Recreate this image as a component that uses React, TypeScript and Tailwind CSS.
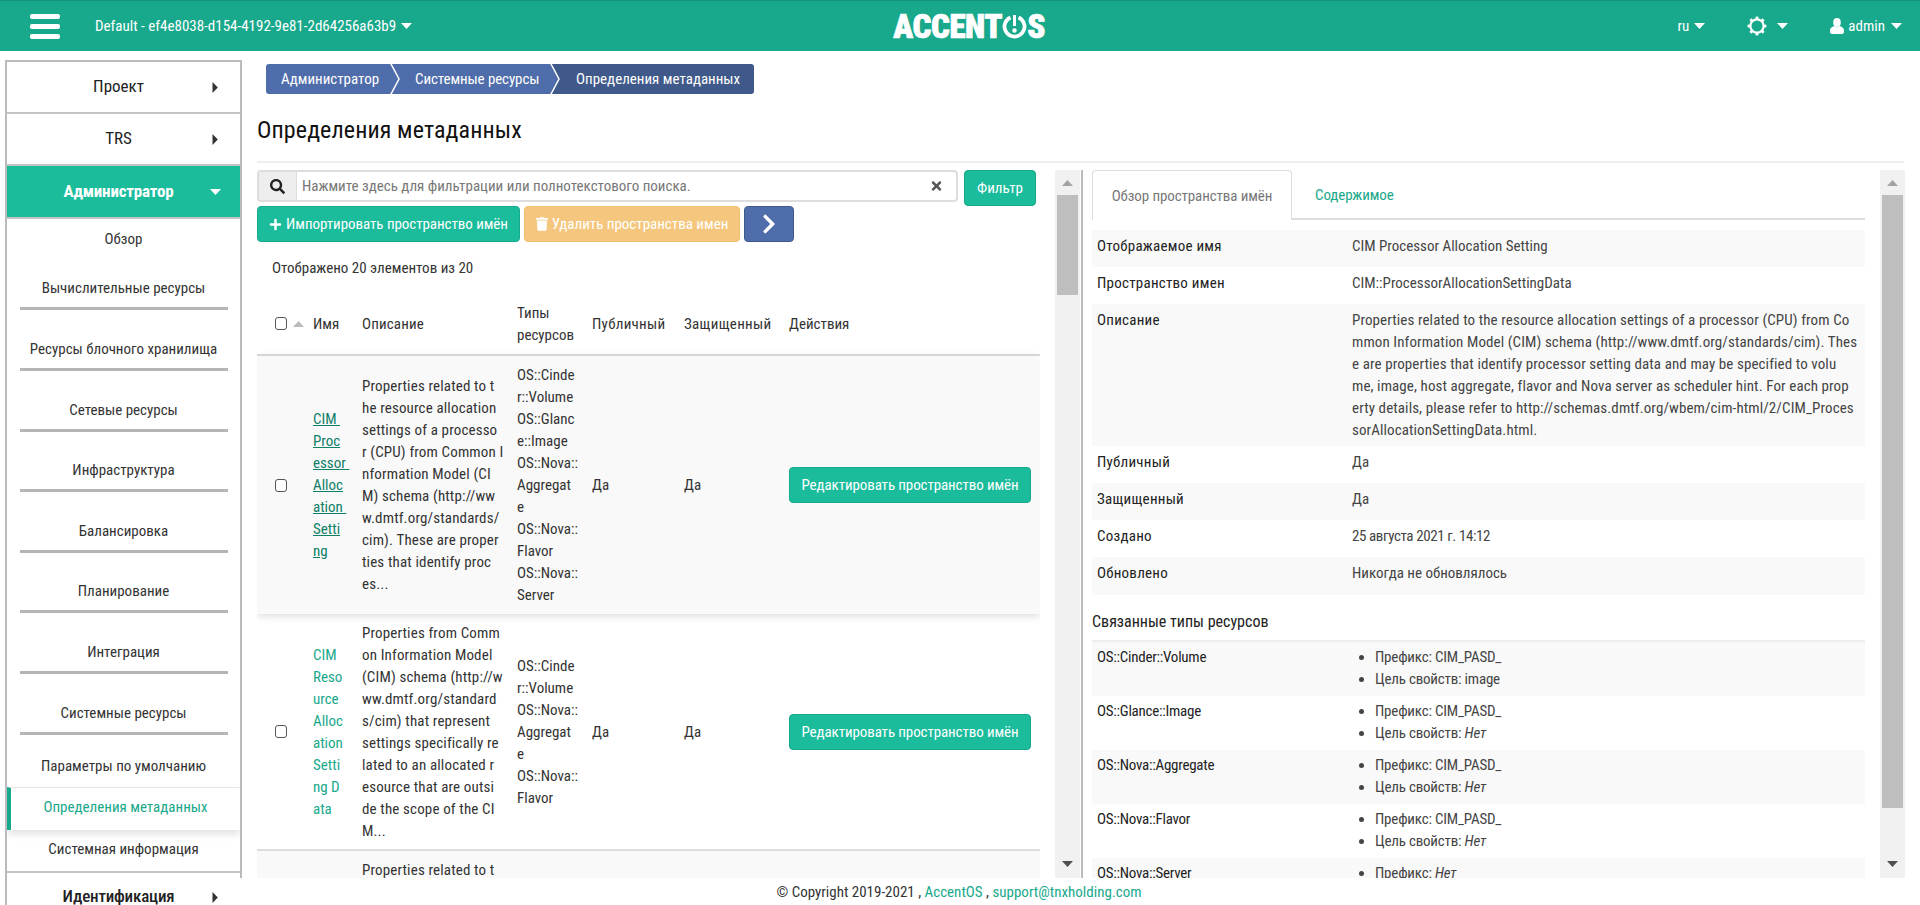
import React from "react";
import { FaSearch, FaTimes, FaPlus, FaTrash, FaChevronRight } from "react-icons/fa";

const GREEN = "text-[#18a88b]";

function Tri({ dir = "down", className = "" }: { dir?: "down" | "up" | "right"; className?: string }) {
  if (dir === "right") {
    return (
      <svg width="6" height="11" viewBox="0 0 6 11" className={"shrink-0 block " + className}>
        <path d="M0.5 0 L5.8 5.5 L0.5 11 Z" fill="currentColor" />
      </svg>
    );
  }
  return (
    <svg width="11" height="6" viewBox="0 0 11 6" className={"shrink-0 block " + className}>
      <path d={dir === "down" ? "M0 0 H11 L5.5 6 Z" : "M0 6 H11 L5.5 0 Z"} fill="currentColor" />
    </svg>
  );
}

function Gear() {
  return (
    <svg width="20" height="20" viewBox="0 0 20 20" className="text-white block">
      <circle cx="10" cy="10" r="6.6" fill="none" stroke="currentColor" strokeWidth="2.2" />
      {[0, 45, 90, 135, 180, 225, 270, 315].map((a) => (
        <rect key={a} x="8.6" y="0.6" width="2.8" height="3" fill="currentColor" transform={`rotate(${a} 10 10)`} />
      ))}
    </svg>
  );
}

function UserIcon() {
  return (
    <svg width="14" height="16" viewBox="0 0 14 16" className="block">
      <ellipse cx="7" cy="4.4" rx="3.8" ry="4.4" fill="white" />
      <path d="M0 13 C0 9.6 2.5 8.6 4.6 8 C6 9 8 9 9.4 8 C11.5 8.6 14 9.6 14 13 V14 C14 15.2 13 16 12 16 H2 C1 16 0 15.2 0 14 Z" fill="white" />
    </svg>
  );
}

function TopBar() {
  return (
    <header className="h-[51px] shrink-0 bg-[#18a88b] border-t border-t-[#149279] flex items-center text-white text-[15px] relative">
      <div className="ml-[30px] w-[30px] flex flex-col gap-[5px]">
        <span className="block h-[5px] bg-white rounded-[2px]" />
        <span className="block h-[5px] bg-white rounded-[2px]" />
        <span className="block h-[5px] bg-white rounded-[2px]" />
      </div>
      <div className="ml-[35px] w-[316px] flex items-center gap-[5px] whitespace-nowrap">
        <span>Default - ef4e8038-d154-4192-9e81-2d64256a63b9</span>
        <Tri />
      </div>
      <div className="ml-[484px] w-[150px] flex items-center justify-end text-[33px] leading-none font-black tracking-[-0.4px] whitespace-nowrap [-webkit-text-stroke:0.7px_white]">
        <span>ACCENT</span>
        <svg width="25" height="25" viewBox="0 0 25 25" className="shrink-0">
          <path d="M8.5 3.4 A10 10 0 1 0 16.5 3.4" fill="none" stroke="white" strokeWidth="3.8" />
          <rect x="11" y="1" width="3" height="11" fill="white" />
          <circle cx="12.5" cy="16.5" r="2.2" fill="white" />
        </svg>
        <span>S</span>
      </div>
      <div className="flex-1" />
      <div className="flex items-center whitespace-nowrap mr-[18px]">
        <span>ru</span>
        <Tri className="ml-[5px]" />
        <span className="ml-[42px]"><Gear /></span>
        <Tri className="ml-[10px]" />
        <span className="ml-[42px]"><UserIcon /></span>
        <span className="ml-[4px]">admin</span>
        <Tri className="ml-[6px]" />
      </div>
    </header>
  );
}

function MainItem({ label, open, active }: { label: string; open?: boolean; active?: boolean }) {
  return (
    <div
      className={
        "flex items-center border-b-2 border-b-[#c4c4c4] text-[17px] " +
        (active ? "h-[53px] bg-[#1abc9c] text-white font-bold tracking-[-0.2px]" : "h-[52px] bg-white text-[#222]")
      }
    >
      <div className="w-[203px] pl-[20px] pb-[2px] text-center">{label}</div>
      {open ? <Tri /> : <Tri dir="right" className="ml-[2px] text-[#333]" />}
    </div>
  );
}

function SubItem({ label, h }: { label: string; h: string }) {
  return (
    <div className={"flex flex-col justify-end items-center " + h}>
      <div className="mb-[8px] text-[#333] whitespace-nowrap">{label}</div>
      <div className="w-[208px] h-[3px] bg-[#b5b5b5]" />
    </div>
  );
}

function Sidebar() {
  return (
    <aside className="w-[237px] ml-[5px] mt-[9px] shrink-0 border-l-2 border-l-[#bbb] border-r-2 border-r-[#bbb] border-t-2 border-t-[#bbb] bg-white overflow-hidden">
      <MainItem label="Проект" />
      <MainItem label="TRS" />
      <MainItem label="Администратор" open active />
      <div className="h-[44px] pb-[4px] flex items-center justify-center text-[#333]">Обзор</div>
      <SubItem label="Вычислительные ресурсы" h="h-[47px]" />
      <SubItem label="Ресурсы блочного хранилища" h="h-[61px]" />
      <SubItem label="Сетевые ресурсы" h="h-[61px]" />
      <SubItem label="Инфраструктура" h="h-[60px]" />
      <SubItem label="Балансировка" h="h-[61px]" />
      <SubItem label="Планирование" h="h-[60px]" />
      <SubItem label="Интеграция" h="h-[61px]" />
      <SubItem label="Системные ресурсы" h="h-[61px]" />
      <div className="h-[52px] flex items-center justify-center text-[#333] pt-[10px]">Параметры по умолчанию</div>
      <div className={"h-[43px] pb-[4px] border-l-[4px] border-l-[#18a88b] border-t border-t-[#e8e8e8] flex items-center justify-center shadow-[0_4px_8px_rgba(0,0,0,0.12)] relative " + GREEN}>
        Определения метаданных
      </div>
      <div className="h-[43px] pb-[4px] flex items-center justify-center text-[#333] border-b-2 border-b-[#c4c4c4]">Системная информация</div>
      <div className="h-[48px] flex items-center text-[#222] text-[17px] font-medium tracking-[-0.2px]">
        <div className="w-[203px] pl-[20px] pb-[2px] text-center">Идентификация</div>
        <Tri dir="right" className="ml-[2px] text-[#333]" />
      </div>
    </aside>
  );
}

function Crumbs() {
  const seg = "h-[30px] flex items-center text-white whitespace-nowrap shrink-0";
  const Sep = ({ last }: { last?: boolean }) => (
    <svg width="10" height="30" viewBox="0 0 10 30" className="shrink-0 block">
      <rect width="10" height="30" fill={last ? "#3f5a8a" : "#4f6dab"} />
      <path d="M0 0 L8.5 15 L0 30 Z" fill="#4f6dab" />
      <path d="M0.5 -1 L9 15 L0.5 31" fill="none" stroke="white" strokeWidth="1.5" />
    </svg>
  );
  return (
    <nav className="flex mt-[13px] ml-[24px]">
      <div className={seg + " w-[124px] bg-[#4f6dab] rounded-l-[3px] pl-[15px]"}>Администратор</div>
      <Sep />
      <div className={seg + " w-[150px] bg-[#4f6dab] pl-[15px] tracking-[-0.1px]"}>Системные ресурсы</div>
      <Sep last />
      <div className={seg + " w-[194px] bg-[#3f5a8a] rounded-r-[3px] pl-[16px]"}>Определения метаданных</div>
    </nav>
  );
}

function Checkbox() {
  return <span className="block w-[12px] h-[13px] border border-[#555] rounded-[3px] bg-white" />;
}

function Lines({ lines }: { lines: string[] }) {
  return (
    <>
      {lines.map((l, i) => (
        <div key={i} className="whitespace-pre">{l}</div>
      ))}
    </>
  );
}

const rows = [
  {
    name: ["CIM ", "Proc", "essor ", "Alloc", "ation ", "Setti", "ng"],
    nameCls: "underline text-[#0f7f68]",
    desc: ["Properties related to t", "he resource allocation", "settings of a processo", "r (CPU) from Common I", "nformation Model (CI", "M) schema (http://ww", "w.dmtf.org/standards/", "cim). These are proper", "ties that identify proc", "es..."],
    types: ["OS::Cinde", "r::Volume", "OS::Glanc", "e::Image", "OS::Nova::", "Aggregat", "e", "OS::Nova::", "Flavor", "OS::Nova::", "Server"],
    h: "h-[258px]",
    bg: "bg-[#f9f9f9] shadow-[0_2px_8px_rgba(0,0,0,0.15)] relative",
  },
  {
    name: ["CIM", "Reso", "urce", "Alloc", "ation", "Setti", "ng D", "ata"],
    nameCls: GREEN,
    desc: ["Properties from Comm", "on Information Model", "(CIM) schema (http://w", "ww.dmtf.org/standard", "s/cim) that represent", "settings specifically re", "lated to an allocated r", "esource that are outsi", "de the scope of the CI", "M..."],
    types: ["OS::Cinde", "r::Volume", "OS::Nova::", "Aggregat", "e", "OS::Nova::", "Flavor"],
    h: "h-[237px] border-b-2 border-b-[#ddd]",
    bg: "",
  },
];

const colCheck = "w-[56px] pl-[18px] shrink-0";
const colName = "w-[49px] shrink-0";
const colDesc = "w-[155px] shrink-0 tracking-[0.15px]";
const colTypes = "w-[75px] shrink-0";
const colPub = "w-[92px] shrink-0";

function LeftPanel() {
  return (
    <section className="w-[783px] shrink-0 flex flex-col overflow-hidden">
      <div className="flex items-start gap-[6px] shrink-0">
        <div className="w-[701px] h-[32px] flex border-2 border-[#ddd] rounded-[4px] bg-white">
          <div className="w-[38px] bg-[#eee] border-r border-r-[#ddd] flex items-center justify-center shrink-0">
            <FaSearch className="w-[15px] h-[15px] text-[#222]" />
          </div>
          <div className="flex-1 pl-[5px] flex items-center text-[#777] whitespace-nowrap">Нажмите здесь для фильтрации или полнотекстового поиска.</div>
          <div className="w-[26px] flex items-center"><FaTimes className="w-[13px] h-[14px] text-[#555]" /></div>
        </div>
        <button className="w-[72px] h-[36px] bg-[#1abc9c] border border-[#18a88b] rounded-[4px] text-white">Фильтр</button>
      </div>
      <div className="flex gap-[4px] shrink-0 h-[36px]">
        <button className="w-[263px] bg-[#1abc9c] border border-[#18a88b] rounded-[4px] text-white flex items-center justify-center gap-[4px] whitespace-nowrap tracking-[-0.05px]">
          <FaPlus className="w-[13px] h-[13px]" />Импортировать пространство имён
        </button>
        <button className="w-[216px] bg-[#f5c77e] border border-[#f0c070] rounded-[4px] text-white flex items-center justify-center gap-[4px] whitespace-nowrap">
          <FaTrash className="w-[12px] h-[14px]" />Удалить пространства имен
        </button>
        <button className="w-[50px] bg-[#4f6dab] border border-[#3f5a8a] rounded-[4px] text-white flex items-center justify-center">
          <FaChevronRight className="w-[16px] h-[22px]" />
        </button>
      </div>
      <div className="h-[52px] shrink-0 flex items-center pl-[15px] text-[#333]">Отображено 20 элементов из 20</div>
      <div className="h-[62px] shrink-0 flex items-center text-[#333] border-b-2 border-b-[#ddd] pb-[1px]">
        <div className={colCheck + " flex items-center gap-[6px]"}>
          <Checkbox />
          <Tri dir="up" className="text-[#bbb]" />
        </div>
        <div className={colName}>Имя</div>
        <div className={colDesc}>Описание</div>
        <div className={colTypes}>Типы<br />ресурсов</div>
        <div className={colPub + " tracking-[0.3px]"}>Публичный</div>
        <div className="w-[105px] shrink-0 tracking-[0.3px]">Защищенный</div>
        <div>Действия</div>
      </div>
      {rows.map((r, i) => (
        <div key={i} className={"flex items-center shrink-0 text-[#333] leading-[22px] " + r.h + " " + r.bg}>
          <div className={colCheck}><Checkbox /></div>
          <div className={colName + " " + r.nameCls}><Lines lines={r.name} /></div>
          <div className={colDesc}><Lines lines={r.desc} /></div>
          <div className={colTypes}><Lines lines={r.types} /></div>
          <div className={colPub}>Да</div>
          <div className="w-[105px] shrink-0">Да</div>
          <button className="w-[242px] h-[36px] bg-[#1abc9c] border border-[#18a88b] rounded-[4px] text-white whitespace-nowrap tracking-[-0.1px]">Редактировать пространство имён</button>
        </div>
      ))}
      <div className="bg-[#f9f9f9] pl-[105px] pt-[8px] leading-[22px] text-[#333] h-[40px] shrink-0 tracking-[0.15px]">
        <div>Properties related to t</div>
      </div>
    </section>
  );
}

function Scrollbar({ thumb }: { thumb: string }) {
  return (
    <div className="w-[25px] bg-[#f1f1f1] flex flex-col items-center shrink-0">
      <div className="h-[25px] flex items-center justify-center"><Tri dir="up" className="text-[#a3a3a3]" /></div>
      <div className={"w-[21px] bg-[#bebebe] " + thumb} />
      <div className="flex-1" />
      <div className="h-[26px] pb-[2px] flex items-center justify-center"><Tri className="text-[#505050]" /></div>
    </div>
  );
}

const info: [string, React.ReactNode, string][] = [
  ["Отображаемое имя", "CIM Processor Allocation Setting", "h-[37px]"],
  ["Пространство имен", "CIM::ProcessorAllocationSettingData", "h-[37px]"],
  [
    "Описание",
    <div className="tracking-[0.1px]">
      <Lines
        lines={[
          "Properties related to the resource allocation settings of a processor (CPU) from Co",
          "mmon Information Model (CIM) schema (http://www.dmtf.org/standards/cim). Thes",
          "e are properties that identify processor setting data and may be specified to volu",
          "me, image, host aggregate, flavor and Nova server as scheduler hint. For each prop",
          "erty details, please refer to http://schemas.dmtf.org/wbem/cim-html/2/CIM_Proces",
          "sorAllocationSettingData.html.",
        ]}
      />
    </div>,
    "h-[142px]",
  ],
  ["Публичный", "Да", "h-[37px]"],
  ["Защищенный", "Да", "h-[37px]"],
  ["Создано", <span className="tracking-[-0.4px]">25 августа 2021 г. 14:12</span>, "h-[37px]"],
  ["Обновлено", "Никогда не обновлялось", "h-[38px]"],
];

const res: [string, string | null, string | null][] = [
  ["OS::Cinder::Volume", "CIM_PASD_", "image"],
  ["OS::Glance::Image", "CIM_PASD_", null],
  ["OS::Nova::Aggregate", "CIM_PASD_", null],
  ["OS::Nova::Flavor", "CIM_PASD_", null],
  ["OS::Nova::Server", null, null],
];

function Value({ v }: { v: string | null }) {
  return v ? <span>{v}</span> : <em>Нет</em>;
}

function RightPanel() {
  return (
    <section className="w-[773px] shrink-0 overflow-hidden text-[#444]">
      <div className="h-[50px] flex">
        <div className="w-[200px] border border-[#ddd] border-b-0 rounded-t-[4px] flex items-center justify-center text-[#777] bg-white tracking-[-0.1px]">Обзор пространства имён</div>
        <div className="flex-1 border-b-2 border-b-[#ddd] flex items-center pl-[23px] pt-[1px] text-[#18a88b] tracking-[-0.1px]">Содержимое</div>
      </div>
      <div className="mt-[10px]">
        {info.map(([k, v, h], i) => (
          <div key={k} className={"flex leading-[22px] pt-[5px] " + h + (i % 2 === 0 ? " bg-[#f9f9f9]" : "")}>
            <div className="w-[260px] pl-[5px] shrink-0 text-[#222] tracking-[0.25px]">{k}</div>
            <div>{v}</div>
          </div>
        ))}
      </div>
      <div className="h-[47px] flex items-end pb-[7px] text-[16px] border-b-2 border-b-[#eee] text-[#222]">Связанные типы ресурсов</div>
      {res.map(([k, p, t], i) => (
        <div key={k} className={"flex h-[54px] leading-[22px] pt-[4px] " + (i % 2 === 0 ? "bg-[#f9f9f9]" : "")}>
          <div className="w-[260px] pl-[5px] shrink-0 text-[#222] tracking-[-0.25px]">{k}</div>
          <ul className="list-disc pl-[23px] tracking-[-0.2px]">
            <li>Префикс: <Value v={p} /></li>
            <li>Цель свойств: <Value v={t} /></li>
          </ul>
        </div>
      ))}
    </section>
  );
}

export default function App() {
  return (
    <div className="w-[1920px] h-[905px] overflow-hidden flex flex-col bg-white text-[15px] leading-[22px] font-['Roboto_Condensed','Liberation_Sans',sans-serif]">
      <TopBar />
      <div className="flex-1 flex min-h-0">
        <Sidebar />
        <div className="flex-1 min-w-0 flex flex-col">
          <div className="flex-1 min-h-0 flex flex-col pr-[16px] overflow-hidden">
            <Crumbs />
            <h1 className="ml-[15px] mt-[24px] h-[24px] leading-[24px] text-[24px] text-[#111] font-normal tracking-[0.1px]">Определения метаданных</h1>
            <div className="ml-[15px] mt-[19px] h-[2px] bg-[#eee] shrink-0" />
            <div className="mt-[7px] ml-[15px] flex-1 min-h-0 flex">
              <LeftPanel />
              <div className="w-[15px] shrink-0" />
              <Scrollbar thumb="h-[100px]" />
              <div className="w-[2px] bg-[#bbb] ml-[1px] shrink-0" />
              <div className="w-[9px] shrink-0" />
              <RightPanel />
              <div className="w-[15px] shrink-0" />
              <Scrollbar thumb="h-[613px]" />
            </div>
          </div>
          <footer className="h-[27px] shrink-0 -ml-[2px] relative bg-white flex items-center justify-center pr-[242px] text-[#333]">
            <span>© Copyright 2019-2021 , <span className={GREEN}>AccentOS</span> , <span className={GREEN}>support@tnxholding.com</span></span>
          </footer>
        </div>
      </div>
    </div>
  );
}
